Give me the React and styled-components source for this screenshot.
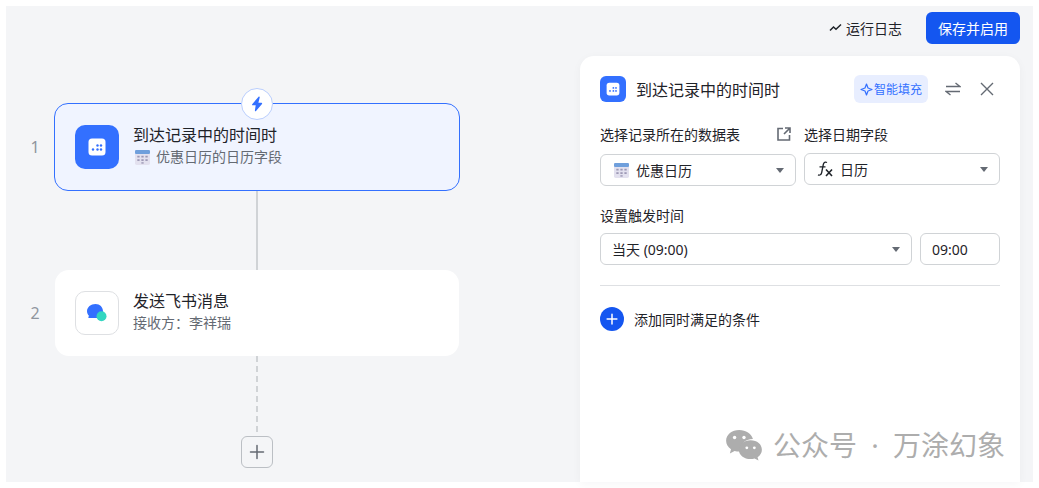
import React from 'react';
import styled, {createGlobalStyle} from 'styled-components';

const GlobalStyle = createGlobalStyle`
  html, body {
    margin: 0;
    padding: 0;
    background: #fff;
    font-family: "Noto Sans", "Noto Sans CJK SC", sans-serif;
    color: #1f2329;
  }
  * { box-sizing: border-box; }
`;

const Page = styled.div`
  position: relative;
  width: 1039px;
  height: 488px;
  padding: 6px;
  overflow: hidden;
`;

const Canvas = styled.div`
  width: 1027px;
  height: 476px;
  background: #f4f5f7;
  display: flex;
  flex-direction: column;
`;

const Toolbar = styled.div`
  height: 50px;
  flex: none;
  padding: 6px 13px 0 0;
  display: flex;
  justify-content: flex-end;
  align-items: flex-start;
`;

const LogButton = styled.div`
  display: flex;
  align-items: center;
  gap: 4px;
  height: 32px;
  margin-right: 24px;
  font-size: 14px;
  color: #1f2329;
`;

const SaveButton = styled.div`
  width: 94px;
  height: 32px;
  border-radius: 6px;
  background: #1456f0;
  color: #fff;
  font-size: 14px;
  display: flex;
  align-items: center;
  justify-content: center;
`;

const Body = styled.div`
  flex: 1;
  display: flex;
  min-height: 0;
`;

const Flow = styled.div`
  width: 574px;
  flex: none;
  padding-top: 47px;
`;

const StepRow = styled.div`
  display: flex;
  align-items: center;
`;

const StepNum = styled.div`
  width: 48px;
  padding-left: 10px;
  flex: none;
  text-align: center;
  font-size: 16px;
  line-height: 20px;
  color: #8f959e;
`;

const Card = styled.div`
  position: relative;
  width: ${p => (p.$active ? 406 : 404)}px;
  height: ${p => (p.$active ? 88 : 86)}px;
  margin-left: ${p => (p.$active ? 0 : 1)}px;
  border-radius: 14px;
  display: flex;
  align-items: center;
  gap: 14px;
  padding-left: 20px;
  background: ${p => (p.$active ? '#f0f4ff' : '#fff')};
  border: ${p => (p.$active ? '1px solid #3370ff' : 'none')};
`;

const TriggerBadge = styled.div`
  position: absolute;
  top: -16px;
  left: 186px;
  width: 32px;
  height: 32px;
  border-radius: 50%;
  background: #fff;
  border: 1px solid #bacefd;
  display: flex;
  align-items: center;
  justify-content: center;
`;

const IconTile = styled.div`
  width: ${p => p.$size || 44}px;
  height: ${p => p.$size || 44}px;
  flex: none;
  border-radius: ${p => (p.$size ? 6 : 10)}px;
  background: ${p => (p.$plain ? '#fff' : '#3370ff')};
  border: ${p => (p.$plain ? '1px solid #dee0e3' : 'none')};
  display: flex;
  align-items: center;
  justify-content: center;
`;

const CardText = styled.div`
  display: flex;
  flex-direction: column;
  padding-bottom: 2px;
`;

const CardTitle = styled.div`
  font-size: 16px;
  line-height: 22px;
  color: #1f2329;
`;

const CardDesc = styled.div`
  display: flex;
  align-items: center;
  gap: 6px;
  padding-left: ${p => (p.$icon ? 2 : 0)}px;
  font-size: 14px;
  line-height: 22px;
  color: #646a73;
`;

const Connector = styled.div`
  margin-left: 250px;
  height: ${p => p.$h}px;
  border-left: 2px ${p => (p.$dashed ? 'dashed #d0d3d6' : 'solid #d0d3d6')};
`;

const AddButton = styled.div`
  margin: 4px 0 0 235px;
  width: 32px;
  height: 32px;
  border-radius: 6px;
  border: 1px solid #bbbfc4;
  display: flex;
  align-items: center;
  justify-content: center;
`;

const Panel = styled.div`
  width: 440px;
  flex: none;
  background: #fff;
  border-radius: 14px 14px 0 0;
  padding: 20px 20px 0;
  box-shadow: 0 2px 10px rgba(31, 35, 41, 0.04);
`;

const PanelHead = styled.div`
  display: flex;
  align-items: center;
  height: 26px;
  padding-right: 6px;
`;

const PanelTitle = styled.div`
  flex: 1;
  margin-left: 10px;
  font-size: 16px;
  color: #1f2329;
`;

const SmartFill = styled.div`
  width: 74px;
  height: 28px;
  border-radius: 6px;
  background: #e8eeff;
  color: #3370ff;
  font-size: 12px;
  display: flex;
  align-items: center;
  justify-content: center;
  gap: 1px;
`;

const HeadIcon = styled.div`
  display: flex;
  margin-left: ${p => p.$gap}px;
`;

const FieldGrid = styled.div`
  display: grid;
  grid-template-columns: 196px 196px;
  column-gap: 8px;
  margin-top: 22px;
`;

const LabelRow = styled.div`
  display: flex;
  align-items: center;
  justify-content: space-between;
  height: 20px;
  font-size: 14px;
  color: #1f2329;
  padding-right: 5px;
`;

const Label = styled.div`
  height: 20px;
  display: flex;
  align-items: center;
  font-size: 14px;
  color: #1f2329;
  margin-top: ${p => p.$top || 0}px;
`;

const Select = styled.div`
  height: 32px;
  margin-top: ${p => p.$top || 0}px;
  border: 1px solid #d0d3d6;
  border-radius: 6px;
  background: #fff;
  display: flex;
  align-items: center;
  padding: 0 11px 0 ${p => p.$left || 11}px;
  font-size: 14px;
  color: #1f2329;
  gap: ${p => p.$gap || 5}px;
  flex: ${p => (p.$grow ? 1 : 'none')};
  width: ${p => (p.$w ? `${p.$w}px` : 'auto')};
`;

const SelectValue = styled.span`
  flex: 1;
`;

const Caret = styled.span`
  width: 0;
  height: 0;
  border-left: 4.5px solid transparent;
  border-right: 4.5px solid transparent;
  border-top: 5px solid #646a73;
`;

const TimeRow = styled.div`
  display: flex;
  gap: 8px;
  margin-top: 8px;
`;

const Divider = styled.div`
  height: 1px;
  background: #dee0e3;
  margin-top: 20px;
`;

const AddCondition = styled.div`
  display: flex;
  align-items: center;
  gap: 10px;
  margin-top: 21px;
  font-size: 14px;
  color: #1f2329;
`;

const AddCircle = styled.div`
  width: 24px;
  height: 24px;
  border-radius: 50%;
  background: #1456f0;
  display: flex;
  align-items: center;
  justify-content: center;
`;

const Watermark = styled.div`
  position: absolute;
  left: 724px;
  top: 427px;
  display: flex;
  align-items: center;
  gap: 9px;
  font-size: 28px;
  line-height: 36px;
  color: #adadad;
  word-spacing: 7px;
  white-space: nowrap;
`;

const CalendarGlyph = ({size}) => (
  <svg width={size} height={size} viewBox="0 0 24 24">
    <rect x="3.500" y="3.500" width="17" height="17" rx="3.500" fill="#fff"/>
    <g fill="#3370ff">
      <circle cx="12.500" cy="10.500" r="1.200"/>
      <circle cx="16" cy="10.500" r="1.200"/>
      <circle cx="8" cy="14.500" r="1.200"/>
      <circle cx="12.500" cy="14.500" r="1.200"/>
      <circle cx="16" cy="14.500" r="1.200"/>
    </g>
  </svg>
);

const TableCalendar = () => (
  <svg width="15" height="15" viewBox="1 1 13 13" style={{flex: 'none'}}>
    <rect x="1" y="1" width="13" height="13" rx="1.500" fill="#e3e1ef"/>
    <rect x="1" y="1" width="13" height="3.500" rx="1" fill="#6f9fdc"/>
    <g fill="#9c98b4">
      <rect x="3" y="6" width="2" height="1.500"/>
      <rect x="6.500" y="6" width="2" height="1.500"/>
      <rect x="10" y="6" width="2" height="1.500"/>
      <rect x="3" y="9" width="2" height="1.500"/>
      <rect x="6.500" y="9" width="2" height="1.500"/>
      <rect x="10" y="9" width="2" height="1.500"/>
      <rect x="6.500" y="11.600" width="2" height="1.200"/>
    </g>
  </svg>
);

const BoltIcon = () => (
  <svg width="14" height="16" viewBox="0 0 14 16">
    <path d="M8.600 0.800 2.200 8.200c-.4.500-.1 1.100.5 1.100h3L4.900 14.600c-.1.700.6 1 1.100.5l6-7.200c.4-.5.1-1.100-.5-1.100H8.400l1.300-5.300c.2-.8-.6-1.200-1.100-.7z" fill="#3370ff"/>
  </svg>
);

const ChatIcon = () => (
  <svg width="20" height="18" viewBox="0 0 20 18">
    <path d="M8.500 0C12.900 0 16 3.200 16 7.200c0 3.900-3 6.800-7 6.800H2c-.7 0-1-.7-.6-1.200l.7-.9C.8 10.600 0 9 0 7.200 0 3.200 3.800 0 8.500 0z" fill="#3370ff"/>
    <circle cx="14.500" cy="12.200" r="5" fill="#33d6c0"/>
  </svg>
);

const PlusIcon = ({size, color, width}) => (
  <svg width={size} height={size} viewBox="0 0 16 16">
    <path d="M8 1.500v13M1.500 8h13" stroke={color} strokeWidth={width} strokeLinecap="round"/>
  </svg>
);

const TrendIcon = () => (
  <svg width="13" height="10" viewBox="0 0 13 10">
    <path d="M1 7.500 4.500 4l2.500 2.300L12 1.500" fill="none" stroke="#1f2329" strokeWidth="1.500"/>
  </svg>
);

const SparkIcon = () => (
  <svg width="13" height="13" viewBox="0 0 13 13">
    <path d="M6.500 1 8 5l4 1.500L8 8l-1.500 4L5 8 1 6.500 5 5z" fill="none" stroke="#3370ff" strokeWidth="1.200" strokeLinejoin="round"/>
  </svg>
);

const SwapIcon = () => (
  <svg width="16" height="14" viewBox="0 0 16 14">
    <path d="M1 4.500h14L10.500 1M15 9.500H1L5.500 13" fill="none" stroke="#646a73" strokeWidth="1.400"/>
  </svg>
);

const CloseIcon = () => (
  <svg width="14" height="14" viewBox="0 0 14 14">
    <path d="M1 1l12 12M13 1 1 13" stroke="#646a73" strokeWidth="1.400"/>
  </svg>
);

const ExternalIcon = () => (
  <svg width="14" height="14" viewBox="0 0 14 14">
    <path d="M6 1.500H1v11.500h11.500V8M8 1h5v5M13 1 7 7" fill="none" stroke="#646a73" strokeWidth="1.600"/>
  </svg>
);

const FxIcon = () => (
  <svg width="16" height="16" viewBox="0 0 16 16">
    <path d="M10 1.500C8.200.6 6.800 1.300 6.300 3.500L4.700 11.500C4.200 13.800 2.800 14.600 1 13.800M2.500 5.800H8.500" fill="none" stroke="#1f2329" strokeWidth="1.300"/>
    <path d="M9 8.500l6 6.500M15 8.500l-6 6.500" fill="none" stroke="#1f2329" strokeWidth="1.600"/>
  </svg>
);

const WechatIcon = () => (
  <svg width="40" height="32" viewBox="0 0 40 34">
    <path d="M15 1C7 1 1 6 1 12.500c0 3.700 2 6.800 5.200 9L5 26l5-2.700c1.600.5 3.300.7 5 .7h1C15.300 16 21 10.500 29.500 10.500 27.800 5 22 1 15 1z" fill="#adadad"/>
    <path d="M27 12c-7 0-12.500 4.400-12.500 10S20 32 27 32c1.500 0 2.800-.2 4.200-.6l4.200 2.200-1-3.700c3-2 4.600-4.800 4.600-7.900C39 16.400 34 12 27 12z" fill="#adadad"/>
    <g fill="#fff">
      <circle cx="10" cy="9" r="1.800"/>
      <circle cx="20" cy="9" r="1.800"/>
      <circle cx="23" cy="20" r="1.500"/>
      <circle cx="31" cy="20" r="1.500"/>
    </g>
  </svg>
);

const App = () => {
  return (
    <Page>
      <GlobalStyle/>
      <Canvas>
        <Toolbar>
          <LogButton><TrendIcon/>运行日志</LogButton>
          <SaveButton>保存并启用</SaveButton>
        </Toolbar>
        <Body>
          <Flow>
            <StepRow>
              <StepNum>1</StepNum>
              <Card $active>
                <TriggerBadge><BoltIcon/></TriggerBadge>
                <IconTile><CalendarGlyph size={24}/></IconTile>
                <CardText>
                  <CardTitle>到达记录中的时间时</CardTitle>
                  <CardDesc $icon><TableCalendar/>优惠日历的日历字段</CardDesc>
                </CardText>
              </Card>
            </StepRow>
            <Connector $h={79}/>
            <StepRow>
              <StepNum>2</StepNum>
              <Card>
                <IconTile $plain><ChatIcon/></IconTile>
                <CardText>
                  <CardTitle>发送飞书消息</CardTitle>
                  <CardDesc>接收方：李祥瑞</CardDesc>
                </CardText>
              </Card>
            </StepRow>
            <Connector $h={76} $dashed/>
            <AddButton><PlusIcon size={16} color="#646a73" width={1.5}/></AddButton>
          </Flow>
          <Panel>
            <PanelHead>
              <IconTile $size={26}><CalendarGlyph size={18}/></IconTile>
              <PanelTitle>到达记录中的时间时</PanelTitle>
              <SmartFill><SparkIcon/>智能填充</SmartFill>
              <HeadIcon $gap={17}><SwapIcon/></HeadIcon>
              <HeadIcon $gap={19}><CloseIcon/></HeadIcon>
            </PanelHead>
            <FieldGrid>
              <LabelRow>选择记录所在的数据表<ExternalIcon/></LabelRow>
              <Label>选择日期字段</Label>
              <Select $top={10} $left={13} $gap={7}><TableCalendar/><SelectValue>优惠日历</SelectValue><Caret/></Select>
              <Select $top={9} $left={12} $gap={7}><FxIcon/><SelectValue>日历</SelectValue><Caret/></Select>
            </FieldGrid>
            <Label $top={19}>设置触发时间</Label>
            <TimeRow>
              <Select $grow><SelectValue>当天 (09:00)</SelectValue><Caret/></Select>
              <Select $w={80}><SelectValue>09:00</SelectValue></Select>
            </TimeRow>
            <Divider/>
            <AddCondition>
              <AddCircle><PlusIcon size={12} color="#fff" width={2}/></AddCircle>
              添加同时满足的条件
            </AddCondition>
          </Panel>
        </Body>
      </Canvas>
      <Watermark><WechatIcon/>公众号 · 万涂幻象</Watermark>
    </Page>
  );
};

export default App;
